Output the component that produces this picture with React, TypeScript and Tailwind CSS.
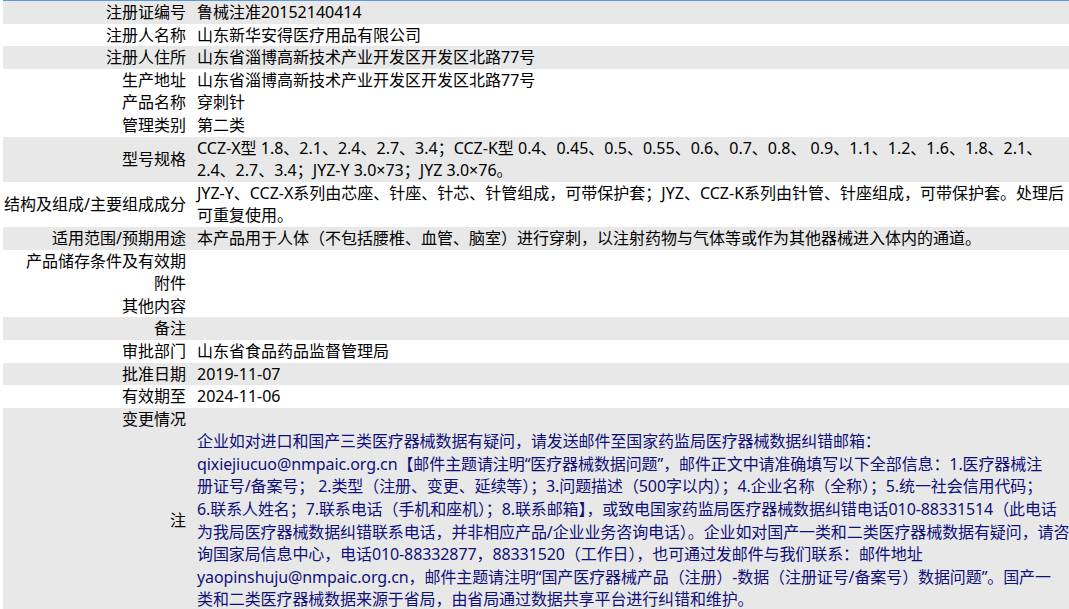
import React from "react";

type Row = { label: string; lines: string[]; gray?: boolean; note?: boolean };

const rows: Row[] = [
  { label: "注册证编号", lines: ["鲁械注准20152140414"], gray: true },
  { label: "注册人名称", lines: ["山东新华安得医疗用品有限公司"] },
  { label: "注册人住所", lines: ["山东省淄博高新技术产业开发区开发区北路77号"], gray: true },
  { label: "生产地址", lines: ["山东省淄博高新技术产业开发区开发区北路77号"] },
  { label: "产品名称", lines: ["穿刺针"] },
  { label: "管理类别", lines: ["第二类"] },
  {
    label: "型号规格",
    lines: [
      "CCZ-X型 1.8、2.1、2.4、2.7、3.4；CCZ-K型 0.4、0.45、0.5、0.55、0.6、0.7、0.8、 0.9、1.1、1.2、1.6、1.8、2.1、",
      "2.4、2.7、3.4；JYZ-Y 3.0×73；JYZ 3.0×76。",
    ],
    gray: true,
  },
  {
    label: "结构及组成/主要组成成分",
    lines: [
      "JYZ-Y、CCZ-X系列由芯座、针座、针芯、针管组成，可带保护套；JYZ、CCZ-K系列由针管、针座组成，可带保护套。处理后",
      "可重复使用。",
    ],
  },
  {
    label: "适用范围/预期用途",
    lines: ["本产品用于人体（不包括腰椎、血管、脑室）进行穿刺，以注射药物与气体等或作为其他器械进入体内的通道。"],
    gray: true,
  },
  { label: "产品储存条件及有效期", lines: [] },
  { label: "附件", lines: [] },
  { label: "其他内容", lines: [] },
  { label: "备注", lines: [], gray: true },
  { label: "审批部门", lines: ["山东省食品药品监督管理局"] },
  { label: "批准日期", lines: ["2019-11-07"], gray: true },
  { label: "有效期至", lines: ["2024-11-06"] },
  { label: "变更情况", lines: [], gray: true },
  {
    label: "注",
    gray: true,
    note: true,
    lines: [
      "企业如对进口和国产三类医疗器械数据有疑问，请发送邮件至国家药监局医疗器械数据纠错邮箱：",
      "qixiejiucuo@nmpaic.org.cn【邮件主题请注明“医疗器械数据问题”，邮件正文中请准确填写以下全部信息：1.医疗器械注",
      "册证号/备案号； 2.类型（注册、变更、延续等）；3.问题描述（500字以内）；4.企业名称（全称）；5.统一社会信用代码；",
      "6.联系人姓名；7.联系电话（手机和座机）；8.联系邮箱】，或致电国家药监局医疗器械数据纠错电话010-88331514（此电话",
      "为我局医疗器械数据纠错联系电话，并非相应产品/企业业务咨询电话）。企业如对国产一类和二类医疗器械数据有疑问，请咨",
      "询国家局信息中心，电话010-88332877，88331520（工作日），也可通过发邮件与我们联系：邮件地址",
      "yaopinshuju@nmpaic.org.cn，邮件主题请注明“国产医疗器械产品（注册）-数据（注册证号/备案号）数据问题”。国产一",
      "类和二类医疗器械数据来源于省局，由省局通过数据共享平台进行纠错和维护。",
    ],
  },
];

export default function App() {
  return (
    <div className="h-screen overflow-hidden bg-white">
      <div
        className="ml-[3px] border-t border-[#5b9bd5] text-[16px] leading-[22.6px] text-black"
        style={{ fontFamily: '"Noto Sans", "Noto Sans CJK SC", sans-serif' }}
      >
        {rows.map((row) => (
          <div key={row.label} className={`flex ${row.gray ? "bg-[#e8e8e8]" : "bg-white"}`}>
            <div className="flex w-[188px] shrink-0 items-center justify-end whitespace-nowrap pr-[5px]">
              {row.label}
            </div>
            <div
              className={`min-h-[22.6px] flex-1 whitespace-nowrap pl-[6px] ${
                row.note ? "tracking-[-0.1px] text-[#10107a]" : ""
              }`}
            >
              {row.lines.map((line, i) => (
                <div key={i}>{line}</div>
              ))}
            </div>
          </div>
        ))}
      </div>
    </div>
  );
}
